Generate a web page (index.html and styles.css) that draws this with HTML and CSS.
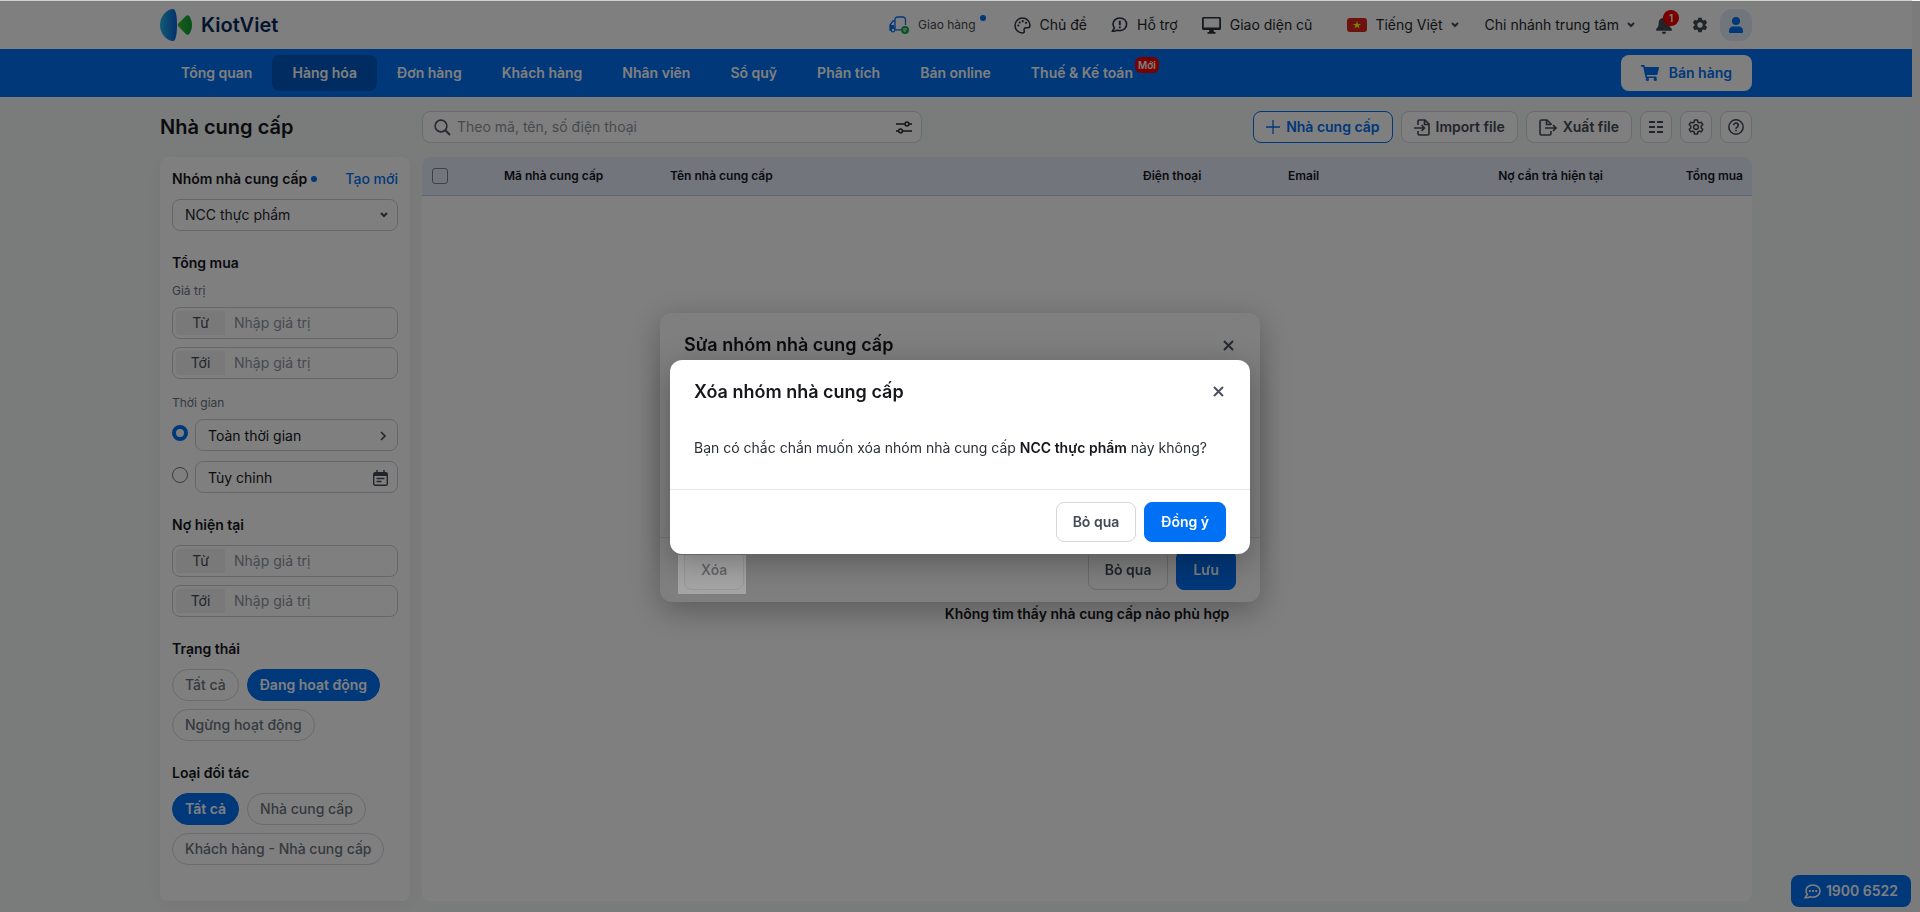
FILE: index.html
```html
<!DOCTYPE html>
<html lang="vi">
<head>
  <meta charset="UTF-8">
  <meta name="viewport" content="width=device-width, initial-scale=1.0">
  <title>Nhà cung cấp - KiotViet</title>
  <link rel="stylesheet" href="styles.css">
</head>
<body>
  <div class="page">
    <header class="topbar">
      <div class="container topbar-inner">
        <a class="logo" href="#">
          <svg width="32" height="32" viewBox="0 0 32 32">
            <defs>
              <linearGradient id="lgBlue" x1="0" x2="1"><stop offset="0" stop-color="#28b4e8"/><stop offset="1" stop-color="#0a62d8"/></linearGradient>
              <linearGradient id="lgGreen" x1="0" x2="1"><stop offset="0" stop-color="#3ac02c"/><stop offset="1" stop-color="#089c34"/></linearGradient>
            </defs>
            <path fill="url(#lgBlue)" d="M13 0c3 0 4 8 4 16s-1 16-4 16C7 32 0 25 0 16S7 0 13 0z"/>
            <path fill="url(#lgGreen)" d="M18.400 14.600l7.200-7.400c1.200-1.200 3-1.400 4 .2C31.200 10 32 13 32 16s-.8 6-2.400 8.600c-1 1.600-2.800 1.400-4 .2l-7.200-7.400a2 2 0 0 1 0-2.800z"/>
          </svg>
          <span>KiotViet</span>
        </a>
        <div class="top-links">
          <a class="top-link delivery" href="#">
            <svg width="20" height="18" viewBox="0 0 20 18" fill="none">
              <path d="M6 13V3.500A2.500 2.500 0 0 1 8.500 1H14a2.500 2.500 0 0 1 2.500 2.500V9M6 5H4L1 9v5h1.500M6 13.800h6" stroke="#0070f4" stroke-width="1.300"/>
              <path d="M1 9h4v4H1z" fill="#0070f4"/>
              <circle cx="4" cy="14" r="1.800" fill="#fff" stroke="#0070f4" stroke-width="1.200"/>
              <circle cx="16" cy="14" r="4" fill="#12a84c"/>
              <path d="M14 13h4M14.500 15h2.500" stroke="#fff"/>
            </svg>
            <span>Giao hàng</span><i class="dot"></i>
          </a>
          <a class="top-link" href="#">
            <svg width="17" height="17" viewBox="0 0 17 17" fill="none" stroke="#2b313a" stroke-width="1.500">
              <path d="M8.500 1a7.500 7.500 0 1 0 0 15c1.300 0 2-.8 1.700-2-.4-1.600-.1-3.200 1.700-3.200h2c1.400 0 2.100-.8 2.100-2.200C16 4.300 12.700 1 8.500 1z"/>
              <g fill="#2b313a" stroke="none"><circle cx="4.300" cy="8.500" r="1.100"/><circle cx="5.700" cy="5.500" r="1.100"/><circle cx="8.700" cy="4.200" r="1.100"/><circle cx="12" cy="5.800" r="1.100"/></g>
            </svg>
            <span>Chủ đề</span>
          </a>
          <a class="top-link" href="#">
            <svg width="17" height="16" viewBox="0 0 17 16" fill="none" stroke="#2b313a" stroke-width="1.600">
              <path d="M8.800 1C4.800 1 2 3.800 2 7c0 1.600.6 2.900 1.400 4L1.500 14.200c2 .2 3.500-.3 4.600-1 .9.300 1.700.4 2.700.4 4 0 6.800-2.900 6.800-6.400S12.800 1 8.800 1z"/>
              <path d="M8.800 3.800v4.400M8.800 9.400v1.800" stroke-width="1.900"/>
            </svg>
            <span>Hỗ trợ</span>
          </a>
          <a class="top-link" href="#">
            <svg width="19" height="17" viewBox="0 0 19 17" fill="#2b313a">
              <path fill-rule="evenodd" d="M1.500 0h16A1.500 1.500 0 0 1 19 1.500v10a1.500 1.500 0 0 1-1.500 1.500h-16A1.500 1.500 0 0 1 0 11.500v-10A1.500 1.500 0 0 1 1.500 0zm.3 1.600v9h15.400v-9z"/>
              <path d="M7.500 13h4l.5 2h1.500v1.700H5.500V15H7z"/>
            </svg>
            <span>Giao diện cũ</span>
          </a>
          <button class="top-link lang" type="button">
            <svg width="20" height="14" viewBox="0 0 20 14"><rect width="20" height="14" rx="3" fill="#da251d"/><path fill="#ff0" d="M10 3l1 2.900h3l-2.400 1.800.9 2.900L10 8.800l-2.500 1.800.9-2.900L6 5.900h3z"/></svg>
            <span>Tiếng Việt</span>
            <svg class="caret" width="8" height="6" viewBox="0 0 8 6"><path d="M1 1l3 3 3-3"/></svg>
          </button>
          <button class="top-link branch" type="button">
            <span>Chi nhánh trung tâm</span>
            <svg class="caret" width="8" height="6" viewBox="0 0 8 6"><path d="M1 1l3 3 3-3"/></svg>
          </button>
          <button class="icon-link bell" type="button" aria-label="Thông báo">
            <svg width="16" height="18" viewBox="0 0 16 18" fill="#434a55"><path d="M8 0a1 1 0 0 1 1 1v.8c2.600.5 4.300 2.600 4.300 5.200 0 3 .9 4.500 2.300 5.800.8.800.3 2-.8 2H1.200c-1.100 0-1.600-1.200-.8-2C1.800 11.500 2.700 10 2.700 7c0-2.600 1.700-4.700 4.300-5.200V1a1 1 0 0 1 1-1zM5.800 15.800h4.400a2.200 2.200 0 0 1-4.400 0z"/></svg>
            <b>1</b>
          </button>
          <button class="icon-link" type="button" aria-label="Thiết lập">
            <svg width="16" height="16" viewBox="0 0 24 24" fill="#434a55"><path fill-rule="evenodd" d="M9.400 1h5.200l.6 3.100 1.900 1.100 3-1 2.600 4.500-2.400 2.100v2.400l2.400 2.100-2.600 4.500-3-1-1.900 1.100-.6 3.100H9.400l-.6-3.100-1.900-1.100-3 1-2.600-4.500 2.400-2.100v-2.400L1.300 8.700l2.600-4.500 3 1 1.900-1.100zM12 8a4 4 0 1 0 0 8 4 4 0 0 0 0-8z"/></svg>
          </button>
          <button class="avatar" type="button" aria-label="Tài khoản">
            <svg width="14" height="16" viewBox="0 0 14 16" fill="#0070f4"><circle cx="7" cy="4" r="4"/><path d="M4 9.500h6c2.300 0 4 1.800 4 4.200V15a1 1 0 0 1-1 1H1a1 1 0 0 1-1-1v-1.300c0-2.400 1.700-4.200 4-4.200z"/></svg>
          </button>
        </div>
      </div>
    </header>

    <nav class="navbar">
      <div class="container navbar-inner">
        <a href="#">Tổng quan</a>
        <a class="active" href="#">Hàng hóa</a>
        <a href="#">Đơn hàng</a>
        <a href="#">Khách hàng</a>
        <a href="#">Nhân viên</a>
        <a href="#">Sổ quỹ</a>
        <a href="#">Phân tích</a>
        <a href="#">Bán online</a>
        <a href="#">Thuế &amp; Kế toán<span class="new">Mới</span></a>
        <button class="sell" type="button">
          <svg width="18" height="16" viewBox="0 0 18 16" fill="#0070f4"><path d="M0 0h2.800c.5 0 .8.300.9.700L4 2h13.200c.5 0 .9.500.8 1l-1.500 6.200c-.1.400-.5.700-.9.700H5.700l.3 1.600h9.500v1.600H5.300a1 1 0 0 1-.9-.8L2.200 1.700H0z"/><circle cx="6.400" cy="14.400" r="1.600"/><circle cx="14.300" cy="14.400" r="1.600"/></svg>
          Bán hàng
        </button>
      </div>
    </nav>

    <main class="container main">
      <h1>Nhà cung cấp</h1>
      <div class="toolbar">
        <label class="search">
          <svg width="17" height="17" viewBox="0 0 17 17" fill="none" stroke="#4b525d" stroke-width="1.600"><circle cx="7" cy="7" r="5.900"/><path d="M11.300 11.300L16 16" stroke-width="2"/></svg>
          <input type="text" placeholder="Theo mã, tên, số điện thoại" aria-label="Tìm kiếm">
          <svg width="16" height="13" viewBox="0 0 16 13" fill="none" stroke="#22272e" stroke-width="1.500"><path d="M0 3h9M13 3h3M0 10h2.500M6.500 10H16"/><circle cx="11" cy="3" r="1.900"/><circle cx="4.500" cy="10" r="1.900"/></svg>
        </label>
        <div class="actions">
          <button class="btn btn-outline" type="button">
            <svg width="14" height="14" viewBox="0 0 14 14" stroke="#0070f4" stroke-width="1.300"><path d="M7 0v14M0 7h14"/></svg>
            Nhà cung cấp
          </button>
          <button class="btn" type="button">
            <svg width="16" height="17" viewBox="0 0 16 17" fill="none" stroke="#434a55" stroke-width="1.600"><path d="M4 6V2.500A1.500 1.500 0 0 1 5.500 1H11l4 4v9.500a1.500 1.500 0 0 1-1.500 1.500h-8A1.500 1.500 0 0 1 4 14.500V12M10.500 1v4.500H15M0 9h10M7.500 6L10.500 9l-3 3"/></svg>
            Import file
          </button>
          <button class="btn" type="button">
            <svg width="18" height="17" viewBox="0 0 18 17" fill="none" stroke="#434a55" stroke-width="1.600"><path d="M12 6V5L8 1H2.500A1.500 1.500 0 0 0 1 2.500v12A1.500 1.500 0 0 0 2.500 16h8a1.500 1.500 0 0 0 1.500-1.500V12M7.500 1v4.500H12M6 9h11M14 6l3 3-3 3"/></svg>
            Xuất file
          </button>
          <button class="btn btn-icon" type="button" aria-label="Cột hiển thị">
            <svg width="14" height="12" viewBox="0 0 14 12" stroke="#434a55" stroke-width="1.800"><path d="M0 1h6M8 1h6M0 6h6M8 6h6M0 11h6M8 11h6"/></svg>
          </button>
          <button class="btn btn-icon" type="button" aria-label="Cài đặt">
            <svg width="16" height="16" viewBox="0 0 24 24" fill="none" stroke="#434a55" stroke-width="2.300" stroke-linejoin="round"><path d="M9.800 1.500h4.400l.6 3 2.200 1.300 2.900-1 2.200 3.800-2.300 2v2.800l2.300 2-2.200 3.800-2.900-1-2.200 1.300-.6 3H9.800l-.6-3L7 18.200l-2.900 1-2.200-3.800 2.300-2v-2.800l-2.300-2 2.200-3.800 2.900 1 2.200-1.300z"/><circle cx="12" cy="12" r="3.500"/></svg>
          </button>
          <button class="btn btn-icon" type="button" aria-label="Trợ giúp">
            <svg width="16" height="16" viewBox="0 0 16 16" fill="none" stroke="#434a55" stroke-width="1.500"><circle cx="8" cy="8" r="7.200"/><path d="M5.800 6.300a2.200 2.200 0 1 1 3.400 1.800c-.8.500-1.200.8-1.200 1.600M8 10.700v1.600" stroke-width="1.700"/></svg>
          </button>
        </div>
      </div>

      <aside class="filters">
        <section>
          <div class="filter-head">
            <label for="group">Nhóm nhà cung cấp<i class="dot"></i></label>
            <a href="#">Tạo mới</a>
          </div>
          <div class="select">
            <select id="group"><option>NCC thực phẩm</option></select>
            <svg class="caret" width="8" height="6" viewBox="0 0 8 6"><path d="M1 1l3 3 3-3"/></svg>
          </div>
        </section>
        <section>
          <h2>Tổng mua</h2>
          <h3>Giá trị</h3>
          <label class="range"><span>Từ</span><input type="text" placeholder="Nhập giá trị"></label>
          <label class="range"><span>Tới</span><input type="text" placeholder="Nhập giá trị"></label>
          <h3 class="time-title">Thời gian</h3>
          <div class="time-row">
            <input type="radio" name="time" id="timeAll" aria-label="Toàn thời gian" checked>
            <button type="button">Toàn thời gian
              <svg width="8" height="10" viewBox="0 0 8 10" fill="none" stroke="#434a55" stroke-width="1.600"><path d="M1 1l4 4-4 4"/></svg>
            </button>
          </div>
          <div class="time-row">
            <input type="radio" name="time" id="timeCustom" aria-label="Tùy chỉnh">
            <button type="button">Tùy chỉnh
              <svg width="15" height="16" viewBox="0 0 15 16" fill="none" stroke="#434a55" stroke-width="1.400"><rect x=".7" y="2.700" width="13.600" height="12.600" rx="1.500"/><path d="M1 4.500h13" stroke-width="3"/><path d="M4 0v3M11 0v3M3.500 8.500h8M3.500 11.500h5"/></svg>
            </button>
          </div>
        </section>
        <section>
          <h2>Nợ hiện tại</h2>
          <label class="range"><span>Từ</span><input type="text" placeholder="Nhập giá trị"></label>
          <label class="range"><span>Tới</span><input type="text" placeholder="Nhập giá trị"></label>
        </section>
        <section>
          <h2>Trạng thái</h2>
          <div class="chips">
            <button type="button">Tất cả</button>
            <button class="on" type="button">Đang hoạt động</button>
            <button type="button">Ngừng hoạt động</button>
          </div>
        </section>
        <section>
          <h2>Loại đối tác</h2>
          <div class="chips">
            <button class="on" type="button">Tất cả</button>
            <button type="button">Nhà cung cấp</button>
            <button type="button">Khách hàng - Nhà cung cấp</button>
          </div>
        </section>
      </aside>

      <div class="list">
        <table>
          <thead>
            <tr>
              <th class="col-check"><input type="checkbox" aria-label="Chọn tất cả"></th>
              <th class="col-code">Mã nhà cung cấp</th>
              <th>Tên nhà cung cấp</th>
              <th class="col-phone">Điện thoại</th>
              <th class="col-email">Email</th>
              <th class="col-debt">Nợ cần trả hiện tại</th>
              <th class="col-total">Tổng mua</th>
            </tr>
          </thead>
        </table>
        <p class="empty">Không tìm thấy nhà cung cấp nào phù hợp</p>
      </div>
    </main>
  </div>

  <button class="hotline" type="button">
    <svg width="17" height="15" viewBox="0 0 17 15" fill="none" stroke="#fff" stroke-width="1.600"><path d="M8.800 1C4.800 1 2 3.600 2 6.800c0 1.500.5 2.700 1.300 3.700L1.200 13.700c2 .2 3.600-.2 4.800-.9.900.2 1.800.4 2.800.4 4 0 7.200-2.700 7.200-6.200S12.800 1 8.800 1z"/><path d="M4.900 7h1.800M8.100 7h1.800M11.300 7h1.800" stroke-width="1.800"/></svg>
    1900 6522
  </button>

  <div class="layer">
    <div class="modal modal-edit" role="dialog" aria-labelledby="editTitle">
      <div class="modal-head">
        <h2 id="editTitle">Sửa nhóm nhà cung cấp</h2>
        <button class="close" type="button" aria-label="Đóng"><svg width="11" height="11" viewBox="0 0 11 11"><path d="M1 1l9 9M10 1l-9 9"/></svg></button>
      </div>
      <div class="modal-body"></div>
      <div class="modal-foot">
        <div class="delete"><button class="btn-lg" type="button">Xóa</button></div>
        <button class="btn-lg" type="button">Bỏ qua</button>
        <button class="btn-lg primary" type="button">Lưu</button>
      </div>
    </div>
  </div>

  <div class="layer backdrop">
    <div class="modal modal-confirm" role="dialog" aria-labelledby="confirmTitle">
      <div class="modal-head">
        <h2 id="confirmTitle">Xóa nhóm nhà cung cấp</h2>
        <button class="close" type="button" aria-label="Đóng"><svg width="11" height="11" viewBox="0 0 11 11"><path d="M1 1l9 9M10 1l-9 9"/></svg></button>
      </div>
      <div class="modal-body">
        <p>Bạn có chắc chắn muốn xóa nhóm nhà cung cấp <strong>NCC thực phẩm</strong> này không?</p>
      </div>
      <div class="modal-foot">
        <button class="btn-lg" type="button">Bỏ qua</button>
        <button class="btn-lg primary" type="button">Đồng ý</button>
      </div>
    </div>
    <div class="focus-mark"></div>
  </div>
</body>
</html>
```
FILE: styles.css
```css
* { box-sizing: border-box; }
body {
  margin: 0;
  font-family: Inter, "Noto Sans", sans-serif;
  font-size: 14px;
  line-height: 20px;
  color: #15171c;
  background: #f6f6f6;
}
h1, h2, h3, p { margin: 0; }
a { color: inherit; text-decoration: none; }
button, input, select {
  font: inherit;
  color: inherit;
  margin: 0;
}
button { white-space: nowrap; padding: 0; border: 0; background: none; }
svg { flex: none; display: block; }
input::placeholder { color: #8c939d; opacity: 1; }

.page {
  min-height: 100vh;
  margin-right: 8px;
  background: #f5f8f6;
  display: flex;
  flex-direction: column;
}
.container {
  width: 100%;
  max-width: 1592px;
  margin: 0 auto;
}
.dot {
  display: inline-block;
  width: 6px;
  height: 6px;
  border-radius: 50%;
  background: #0070f4;
}
.caret { fill: none; stroke: #434a55; stroke-width: 2; }

/* top bar */
.topbar { background: #fff; border-top: 1px solid #cfd3d0; }
.topbar-inner {
  height: 48px;
  display: flex;
  align-items: center;
  justify-content: space-between;
}
.logo {
  display: flex;
  align-items: center;
  gap: 9px;
  font-size: 20px;
  font-weight: 600;
  color: #062a5c;
}
.top-links { display: flex; align-items: center; color: #22272e; }
.top-link { display: flex; align-items: center; gap: 9px; margin-right: 24px; }
.delivery { font-size: 12px; color: #434a55; margin-right: 26px; }
.delivery .dot { margin: -14px 2px 0 -5px; }
.lang { margin: 0 26px 0 11px; gap: 8px; }
.branch { margin-right: 21px; gap: 8px; }
.icon-link { position: relative; margin-right: 20px; }
.bell b {
  position: absolute;
  left: 7px;
  top: -6px;
  width: 16px;
  height: 16px;
  border-radius: 8px;
  background: #f00000;
  color: #fff;
  font-size: 10px;
  line-height: 16px;
  font-weight: 600;
}
.avatar {
  width: 32px;
  height: 32px;
  border-radius: 12px;
  background: #e2eaf8;
  display: grid;
  place-items: center;
  margin-left: -8px;
}

/* navigation */
.navbar { background: #0070f4; }
.navbar-inner { height: 48px; padding-left: 1px; display: flex; align-items: center; }
.navbar a {
  position: relative;
  height: 36px;
  line-height: 36px;
  padding: 0 20px;
  border-radius: 8px;
  color: #fff;
  font-weight: 600;
}
.navbar a.active { background: #0058c2; }
.new {
  position: absolute;
  right: -6px;
  top: 2px;
  padding: 0 3px;
  border-radius: 6px;
  background: #f00000;
  font-size: 10px;
  line-height: 16px;
}
.sell {
  margin-left: auto;
  height: 36px;
  padding: 0 20px;
  display: flex;
  align-items: center;
  gap: 10px;
  border-radius: 8px;
  background: #fff;
  color: #0070f4;
  font-weight: 600;
}

/* page content */
.main {
  flex: 1;
  display: grid;
  grid-template-columns: 250px 1fr;
  grid-template-rows: 32px 1fr;
  gap: 14px 12px;
  padding: 14px 0 11px;
}
h1 { font-size: 20px; line-height: 32px; font-weight: 600; }
.toolbar { display: flex; justify-content: space-between; }
.search {
  width: 500px;
  display: flex;
  align-items: center;
  gap: 6px;
  padding: 0 9px 0 11px;
  border: 1px solid #d3d6db;
  border-radius: 8px;
  background: #fff;
}
.search input { flex: 1; border: 0; padding: 0; outline: 0; background: none; }
.actions { display: flex; gap: 8px; }
.btn {
  height: 32px;
  padding: 0 12px;
  display: flex;
  align-items: center;
  justify-content: center;
  gap: 6px;
  border: 1px solid #d3d6db;
  border-radius: 8px;
  background: #fff;
  color: #434a55;
  font-weight: 600;
}
.btn-outline { border-color: #0070f4; color: #0070f4; }
.btn-icon { width: 32px; padding: 0; }

.filters {
  padding: 12px;
  border-radius: 8px;
  background: #fff;
  box-shadow: 0 4px 20px rgba(0, 0, 0, .05);
  display: flex;
  flex-direction: column;
  gap: 22px;
}
.filter-head { display: flex; justify-content: space-between; margin-bottom: 10px; }
.filter-head label { font-weight: 600; }
.filter-head .dot { margin: 0 0 2px 4px; }
.filter-head a { color: #0070f4; font-weight: 500; }
.filters h2 { font-size: 14px; line-height: 20px; font-weight: 600; margin-bottom: 10px; }
.filters h3 {
  font-size: 12px;
  line-height: 16px;
  font-weight: 400;
  color: #6b727e;
  margin-bottom: 8px;
}
.filters .time-title { margin-top: 16px; }
.select { position: relative; }
.select select {
  width: 100%;
  height: 32px;
  padding: 0 12px;
  appearance: none;
  border: 1px solid #c9cdd3;
  border-radius: 8px;
  background: #fff;
  color: #22272e;
}
.select .caret { position: absolute; right: 10px; top: 13px; }
.range {
  height: 32px;
  padding: 3px;
  display: flex;
  border: 1px solid #c9cdd3;
  border-radius: 8px;
}
.range + .range { margin-top: 8px; }
.range span {
  width: 49px;
  line-height: 24px;
  text-align: center;
  background: #f2f2f3;
  border-radius: 4px 0 0 4px;
  color: #434a55;
}
.range input { flex: 1; min-width: 0; border: 0; padding: 0 9px; outline: 0; background: none; }
.time-row { display: flex; gap: 7px; }
.time-row + .time-row { margin-top: 10px; }
.time-row input {
  appearance: none;
  width: 16px;
  height: 16px;
  margin-top: 6px;
  border: 1px solid #6b727e;
  border-radius: 50%;
}
.time-row input:checked { border: 4px solid #0070f4; }
.time-row button {
  flex: 1;
  height: 32px;
  padding: 2px 9px 0 12px;
  display: flex;
  align-items: center;
  justify-content: space-between;
  border: 1px solid #c9cdd3;
  border-radius: 8px;
}
.chips { display: flex; flex-wrap: wrap; gap: 8px; }
.chips button {
  height: 32px;
  padding: 0 12px;
  border: 1px solid #d3d6db;
  border-radius: 16px;
  color: #6b727e;
  font-weight: 500;
}
.chips .on { background: #0070f4; border-color: #0070f4; color: #fff; font-weight: 600; }

.list { background: #fff; border-radius: 8px; overflow: hidden; }
table { width: 100%; border-collapse: collapse; table-layout: fixed; }
th {
  height: 38px;
  padding: 0 9px 0 10px;
  background: #e4ecf9;
  border-bottom: 1px solid #b3c8ea;
  font-size: 12px;
  font-weight: 600;
  text-align: left;
}
.col-check { width: 72px; }
.col-code { width: 166px; }
.col-phone { width: 145px; }
.col-email { width: 180px; }
.col-debt { width: 154px; text-align: right; }
.col-total { width: 140px; text-align: right; }
th input {
  appearance: none;
  display: block;
  width: 16px;
  height: 16px;
  border: 1px solid #7d8490;
  border-radius: 3px;
}
.empty { padding-top: 408px; text-align: center; font-weight: 600; }

.hotline {
  position: fixed;
  right: 9px;
  bottom: 5px;
  height: 32px;
  padding: 0 13px;
  display: flex;
  align-items: center;
  gap: 5px;
  border-radius: 8px;
  background: #0070f4;
  color: #fff;
  font-weight: 600;
}

/* dialogs */
.layer {
  position: fixed;
  inset: 1px 0 0;
  display: grid;
  place-items: center;
}
.backdrop { background: rgba(0, 0, 0, .5); }
.modal {
  border-radius: 12px;
  background: #fff;
  box-shadow: 0 8px 32px rgba(0, 0, 0, .3);
}
.modal-edit { width: 600px; margin-top: 2px; }
.modal-confirm { width: 580px; z-index: 1; }
.modal-head {
  height: 64px;
  padding: 0 24px;
  display: flex;
  align-items: center;
  justify-content: space-between;
}
.modal-head h2 { font-size: 18px; line-height: 24px; font-weight: 600; }
.close { padding: 3px 2px; }
.close path { stroke: #4b525d; stroke-width: 2; }
.modal-edit .modal-body { height: 160px; }
.modal-confirm .modal-body { padding: 14px 24px 31px; color: #2b3037; }
.modal-confirm strong { font-weight: 600; color: #15171c; }
.modal-foot {
  padding: 12px 24px;
  display: flex;
  justify-content: flex-end;
  gap: 8px;
  border-top: 1px solid #e5e6e8;
}
.delete { margin-right: auto; }
.btn-lg {
  height: 40px;
  padding: 0 16px;
  border: 1px solid #d3d6db;
  border-radius: 8px;
  background: #fff;
  color: #434a55;
  font-weight: 600;
}
.btn-lg.primary { background: #0070f4; border-color: #0070f4; color: #fff; }

/* flash left on the delete button behind the confirm dialog */
.focus-mark {
  position: absolute;
  left: calc(50% - 282px);
  top: calc(50% + 98px);
  width: 68px;
  height: 39px;
  background: rgba(255, 255, 255, .3);
}
```
